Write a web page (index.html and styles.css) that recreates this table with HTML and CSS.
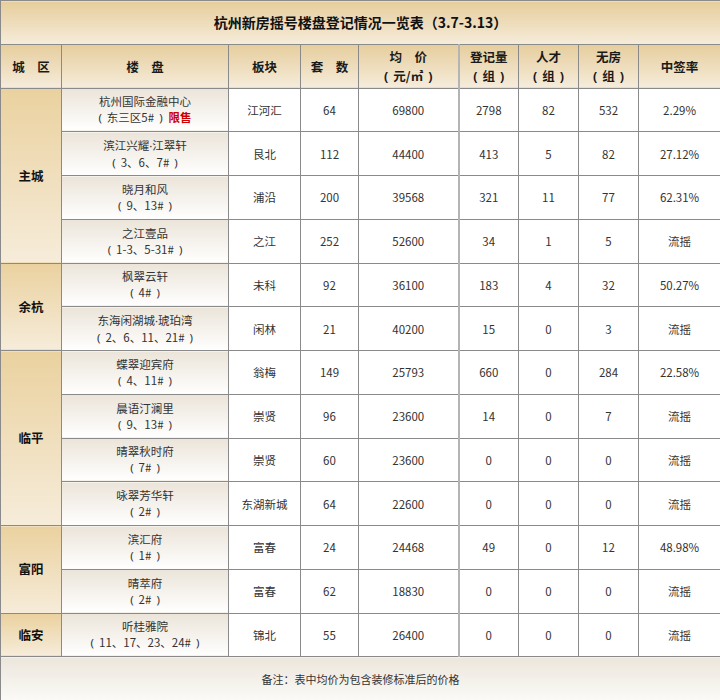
FILE: index.html
```html
<!DOCTYPE html>
<html lang="zh">
<head>
<meta charset="utf-8">
<title>杭州新房摇号楼盘登记情况一览表</title>
<link rel="stylesheet" href="styles.css">
</head>
<body>
<table class="sheet">
  <colgroup>
    <col class="c-area"><col class="c-name"><col class="c-block"><col class="c-units"><col class="c-price"><col class="c-reg"><col class="c-talent"><col class="c-nohouse"><col class="c-rate">
  </colgroup>
  <tr class="r-title"><th colspan="9" class="title">杭州新房摇号楼盘登记情况一览表（3.7-3.13）</th></tr>
  <tr class="r-head">
    <th class="head">城　区</th>
    <th class="head">楼　盘</th>
    <th class="head">板块</th>
    <th class="head">套　数</th>
    <th class="head">均　价<br><span class="pl">(</span>元/㎡<span class="pr">)</span></th>
    <th class="head reg">登记量<br><span class="pl">(</span>组<span class="pr">)</span></th>
    <th class="head">人才<br><span class="pl">(</span>组<span class="pr">)</span></th>
    <th class="head">无房<br><span class="pl">(</span>组<span class="pr">)</span></th>
    <th class="head">中签率</th>
  </tr>
  <tr>
    <td class="area" rowspan="4">主城</td>
    <td class="name">杭州国际金融中心<br><span class="pl">(</span>东三区5#<span class="pr">)</span><span class="limit">限售</span></td>
    <td>江河汇</td><td>64</td><td>69800</td><td class="reg">2798</td><td>82</td><td>532</td><td>2.29%</td>
  </tr>
  <tr>
    <td class="name">滨江兴耀<span class="dot">·</span>江翠轩<br><span class="pl">(</span>3、6、7#<span class="pr">)</span></td>
    <td>艮北</td><td>112</td><td>44400</td><td class="reg">413</td><td>5</td><td>82</td><td>27.12%</td>
  </tr>
  <tr>
    <td class="name">晓月和风<br><span class="pl">(</span>9、13#<span class="pr">)</span></td>
    <td>浦沿</td><td>200</td><td>39568</td><td class="reg">321</td><td>11</td><td>77</td><td>62.31%</td>
  </tr>
  <tr>
    <td class="name">之江壹品<br><span class="pl">(</span>1-3、5-31#<span class="pr">)</span></td>
    <td>之江</td><td>252</td><td>52600</td><td class="reg">34</td><td>1</td><td>5</td><td>流摇</td>
  </tr>
  <tr>
    <td class="area" rowspan="2">余杭</td>
    <td class="name">枫翠云轩<br><span class="pl">(</span>4#<span class="pr">)</span></td>
    <td>未科</td><td>92</td><td>36100</td><td class="reg">183</td><td>4</td><td>32</td><td>50.27%</td>
  </tr>
  <tr>
    <td class="name">东海闲湖城<span class="dot">·</span>琥珀湾<br><span class="pl">(</span>2、6、11、21#<span class="pr">)</span></td>
    <td>闲林</td><td>21</td><td>40200</td><td class="reg">15</td><td>0</td><td>3</td><td>流摇</td>
  </tr>
  <tr>
    <td class="area" rowspan="4">临平</td>
    <td class="name">蝶翠迎宾府<br><span class="pl">(</span>4、11#<span class="pr">)</span></td>
    <td>翁梅</td><td>149</td><td>25793</td><td class="reg">660</td><td>0</td><td>284</td><td>22.58%</td>
  </tr>
  <tr>
    <td class="name">晨语汀澜里<br><span class="pl">(</span>9、13#<span class="pr">)</span></td>
    <td>崇贤</td><td>96</td><td>23600</td><td class="reg">14</td><td>0</td><td>7</td><td>流摇</td>
  </tr>
  <tr>
    <td class="name">晴翠秋时府<br><span class="pl">(</span>7#<span class="pr">)</span></td>
    <td>崇贤</td><td>60</td><td>23600</td><td class="reg">0</td><td>0</td><td>0</td><td>流摇</td>
  </tr>
  <tr>
    <td class="name">咏翠芳华轩<br><span class="pl">(</span>2#<span class="pr">)</span></td>
    <td>东湖新城</td><td>64</td><td>22600</td><td class="reg">0</td><td>0</td><td>0</td><td>流摇</td>
  </tr>
  <tr>
    <td class="area" rowspan="2">富阳</td>
    <td class="name">滨汇府<br><span class="pl">(</span>1#<span class="pr">)</span></td>
    <td>富春</td><td>24</td><td>24468</td><td class="reg">49</td><td>0</td><td>12</td><td>48.98%</td>
  </tr>
  <tr>
    <td class="name">晴萃府<br><span class="pl">(</span>2#<span class="pr">)</span></td>
    <td>富春</td><td>62</td><td>18830</td><td class="reg">0</td><td>0</td><td>0</td><td>流摇</td>
  </tr>
  <tr>
    <td class="area">临安</td>
    <td class="name">听桂雅院<br><span class="pl">(</span>11、17、23、24#<span class="pr">)</span></td>
    <td>锦北</td><td>55</td><td>26400</td><td class="reg">0</td><td>0</td><td>0</td><td>流摇</td>
  </tr>
  <tr class="r-foot"><td colspan="9" class="foot">备注：表中均价为包含装修标准后的价格</td></tr>
</table>
</body>
</html>
```

FILE: styles.css
```css
html, body {
  margin: 0;
  padding: 0;
  background: #ffffff;
}

.sheet {
  width: 720px;
  height: 700px;
  border-collapse: collapse;
  table-layout: fixed;
  font-family: "Noto Sans CJK SC", "Noto Sans", sans-serif;
  color: #333333;
  text-spacing-trim: space-all;
}

.c-area { width: 61px; }
.c-name { width: 167px; }
.c-block { width: 72px; }
.c-units { width: 58px; }
.c-price { width: 100px; }
.c-reg { width: 60px; }
.c-talent { width: 60px; }
.c-nohouse { width: 60px; }
.c-rate { width: 82px; }

.sheet tr {
  height: 43.75px;
}

.sheet td,
.sheet th {
  border: 1px solid #8a8a8a;
  padding: 0;
  text-align: center;
  vertical-align: middle;
  font-size: 11.5px;
  line-height: 16px;
  font-weight: normal;
}

.title {
  background: linear-gradient(to bottom, #e6cd9c, #f5ecdb);
  font-size: 14px !important;
  font-weight: bold !important;
  color: #111111;
}

.head {
  background: linear-gradient(to bottom, #e6cd9c, #f5ecdb);
  font-size: 12.5px !important;
  font-weight: bold !important;
  color: #1a1a1a;
  line-height: 19px !important;
}

.area {
  background: linear-gradient(to bottom, #ead19f, #f6ecda);
  font-size: 12.5px !important;
  font-weight: bold !important;
  color: #111111;
}

.name {
  background: linear-gradient(to bottom, #ebe4d9, #ffffff);
}

.dot {
  font-family: "Noto Sans", sans-serif;
}

.pl,
.pr {
  font-family: "Noto Sans", sans-serif;
}

.pl {
  padding-right: 5px;
}

.pr {
  padding-left: 5px;
}

.reg {
  border-left: 2px solid #b4b4b4 !important;
}

.limit {
  color: #cc0000;
  font-weight: bold;
  margin-left: 6px;
}

.foot {
  background: linear-gradient(to bottom, #ece6dc, #fbfaf7);
  font-size: 11px !important;
}
```
